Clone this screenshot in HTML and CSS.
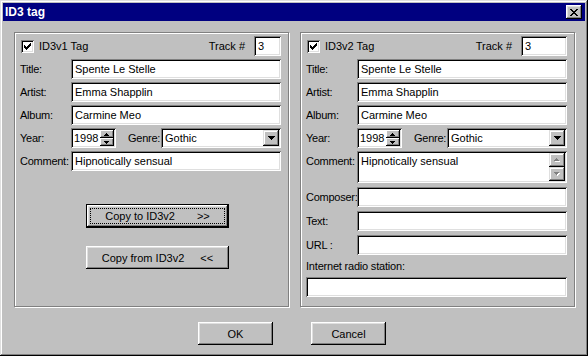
FILE: index.html
```html
<!DOCTYPE html>
<html>
<head>
<meta charset="utf-8">
<link rel="stylesheet" href="styles.css">
</head>
<body>
<div class="window">
  <div class="titlebar">
    <span class="title">ID3 tag</span>
    <span class="close"><svg width="8" height="7" viewBox="0 0 8 7"><path d="M0 0h2v1H0z M6 0h2v1H6z M1 1h2v1H1z M5 1h2v1H5z M2 2h4v1H2z M3 3h2v1H3z M2 4h4v1H2z M1 5h2v1H1z M5 5h2v1H5z M0 6h2v1H0z M6 6h2v1H6z" fill="#000"/></svg></span>
  </div>
  <div class="content">
    <div class="groups">
      <section class="group">
        <div class="row head">
          <span class="check"><svg width="7" height="7" viewBox="0 0 7 7"><path d="M0 2h1v3H0z M1 3h1v3H1z M2 4h1v3H2z M3 3h1v3H3z M4 2h1v3H4z M5 1h1v3H5z M6 0h1v3H6z" fill="#000"/></svg></span>
          <span class="check-label">ID3v1 Tag</span>
          <span class="track-label">Track #</span>
          <span class="field track">3</span>
        </div>
        <div class="row"><span class="lbl">Title:</span><span class="field">Spente Le Stelle</span></div>
        <div class="row"><span class="lbl">Artist:</span><span class="field">Emma Shapplin</span></div>
        <div class="row"><span class="lbl">Album:</span><span class="field">Carmine Meo</span></div>
        <div class="row">
          <span class="lbl">Year:</span>
          <span class="spin"><span class="spin-val">1998</span><span class="spin-btns"><span class="sbtn"><svg width="5" height="3" viewBox="0 0 5 3"><path d="M2 0h1v1H2z M1 1h3v1H1z M0 2h5v1H0z" fill="#000"/></svg></span><span class="sbtn"><svg width="5" height="3" viewBox="0 0 5 3"><path d="M0 0h5v1H0z M1 1h3v1H1z M2 2h1v1H2z" fill="#000"/></svg></span></span></span>
          <span class="lbl-genre">Genre:</span>
          <span class="combo"><span class="combo-val">Gothic</span><span class="combo-btn"><svg width="7" height="4" viewBox="0 0 7 4"><path d="M0 0h7v1H0z M1 1h5v1H1z M2 2h3v1H2z M3 3h1v1H3z" fill="#000"/></svg></span></span>
        </div>
        <div class="row"><span class="lbl">Comment:</span><span class="field">Hipnotically sensual</span></div>
        <button class="btn default copy-to"><span class="focus"><span>Copy to ID3v2</span><span class="arrows wide">&gt;&gt;</span></span></button>
        <button class="btn copy-from"><span>Copy from ID3v2</span><span class="arrows">&lt;&lt;</span></button>
      </section>

      <section class="group">
        <div class="row head">
          <span class="check"><svg width="7" height="7" viewBox="0 0 7 7"><path d="M0 2h1v3H0z M1 3h1v3H1z M2 4h1v3H2z M3 3h1v3H3z M4 2h1v3H4z M5 1h1v3H5z M6 0h1v3H6z" fill="#000"/></svg></span>
          <span class="check-label">ID3v2 Tag</span>
          <span class="track-label">Track #</span>
          <span class="field track wide">3</span>
        </div>
        <div class="row"><span class="lbl">Title:</span><span class="field">Spente Le Stelle</span></div>
        <div class="row"><span class="lbl">Artist:</span><span class="field">Emma Shapplin</span></div>
        <div class="row"><span class="lbl">Album:</span><span class="field">Carmine Meo</span></div>
        <div class="row">
          <span class="lbl">Year:</span>
          <span class="spin"><span class="spin-val">1998</span><span class="spin-btns"><span class="sbtn"><svg width="5" height="3" viewBox="0 0 5 3"><path d="M2 0h1v1H2z M1 1h3v1H1z M0 2h5v1H0z" fill="#000"/></svg></span><span class="sbtn"><svg width="5" height="3" viewBox="0 0 5 3"><path d="M0 0h5v1H0z M1 1h3v1H1z M2 2h1v1H2z" fill="#000"/></svg></span></span></span>
          <span class="lbl-genre">Genre:</span>
          <span class="combo"><span class="combo-val">Gothic</span><span class="combo-btn"><svg width="7" height="4" viewBox="0 0 7 4"><path d="M0 0h7v1H0z M1 1h5v1H1z M2 2h3v1H2z M3 3h1v1H3z" fill="#000"/></svg></span></span>
        </div>
        <div class="row tall">
          <span class="lbl top">Comment:</span>
          <span class="memo">
            <span class="memo-text">Hipnotically sensual</span>
            <span class="vscroll">
              <span class="sbar"><svg width="8" height="5" viewBox="0 0 8 5"><path d="M4 1h1v1H4z M3 2h3v1H3z M2 3h5v1H2z" fill="#fff"/><path d="M3 0h1v1H3z M2 1h3v1H2z M1 2h5v1H1z" fill="#808080"/></svg></span>
              <span class="sbar"><svg width="8" height="5" viewBox="0 0 8 5"><path d="M2 1h5v1H2z M3 2h3v1H3z M4 3h1v1H4z" fill="#fff"/><path d="M1 0h5v1H1z M2 1h3v1H2z M3 2h1v1H3z" fill="#808080"/></svg></span>
            </span>
          </span>
        </div>
        <div class="row loose"><span class="lbl">Composer:</span><span class="field"></span></div>
        <div class="row loose"><span class="lbl">Text:</span><span class="field"></span></div>
        <div class="row loose"><span class="lbl">URL :</span><span class="field"></span></div>
        <div class="radio-label">Internet radio station:</div>
        <div class="row radio"><span class="field"></span></div>
      </section>
    </div>
    <div class="actions">
      <button class="btn action">OK</button>
      <button class="btn action">Cancel</button>
    </div>
  </div>
</div>
</body>
</html>
```

FILE: styles.css
```css
* { box-sizing: border-box; }

body {
  margin: 0;
  background: #c0c0c0;
  font-family: "Liberation Sans", Arial, sans-serif;
  font-size: 11px;
  color: #000;
}

.window {
  width: 588px;
  height: 356px;
  padding: 3px;
  background: #c0c0c0;
  box-shadow: inset -1px -1px #000, inset 1px 1px #dfdfdf, inset -2px -2px #808080, inset 2px 2px #fff;
  display: flex;
  flex-direction: column;
}

.titlebar {
  height: 18px;
  background: #000080;
  display: flex;
  align-items: center;
  justify-content: space-between;
  padding: 0 3px 0 2px;
}

.title {
  color: #fff;
  font-weight: bold;
  font-size: 12px;
  line-height: 18px;
}

.close {
  width: 16px;
  height: 14px;
  background: #c0c0c0;
  box-shadow: inset -1px -1px #000, inset 1px 1px #fff, inset -2px -2px #808080, inset 2px 2px #dfdfdf;
  display: flex;
  align-items: center;
  justify-content: center;
  padding-right: 1px;
}
.close svg { display: block; }

.content {
  flex: 1;
  padding: 11px 10px 0 11px;
  display: flex;
  flex-direction: column;
}

.groups {
  display: flex;
  gap: 11px;
}

.group {
  width: 275px;
  height: 275px;
  border: 1px solid #808080;
  box-shadow: 1px 1px 0 #fff, inset 1px 1px 0 #fff;
  padding: 3px 7px 0 5px;
  display: flex;
  flex-direction: column;
  align-items: stretch;
}

.row {
  display: flex;
  align-items: center;
  height: 20px;
  margin-top: 3px;
  flex: none;
}
.row.head { margin-top: 0; }
.row.tall { height: 32px; align-items: flex-start; }
.row.loose { margin-top: 4px; }
.row.radio { margin-top: 4px; }

.lbl {
  width: 51px;
  flex: none;
  white-space: nowrap;
  letter-spacing: -0.25px;
}
.lbl.top { line-height: 20px; }

.field, .spin, .combo, .memo, .check {
  background: #fff;
  box-shadow: inset 1px 1px #808080, inset -1px -1px #fff, inset 2px 2px #000, inset -2px -2px #dfdfdf;
}

.field {
  flex: 1;
  height: 20px;
  line-height: 20px;
  padding: 0 3px 0 4px;
  white-space: nowrap;
  overflow: hidden;
}

.check {
  width: 13px;
  height: 13px;
  flex: none;
  margin-left: 1px;
  display: flex;
  align-items: center;
  justify-content: center;
}
.check svg { display: block; }

.check-label { margin-left: 5px; }

.track-label { margin-left: auto; margin-right: 9px; }
.field.track { flex: none; width: 27px; }
.field.track.wide { width: 46px; }

.spin {
  width: 45px;
  height: 20px;
  flex: none;
  display: flex;
  padding: 2px;
}
.spin-val {
  flex: 1;
  line-height: 16px;
  padding-left: 1px;
}
.spin-btns {
  width: 14px;
  display: flex;
  flex-direction: column;
}
.sbtn {
  flex: 1;
  background: #c0c0c0;
  box-shadow: inset -1px -1px #000, inset 1px 1px #fff, inset -2px -2px #808080;
  display: flex;
  align-items: center;
  justify-content: center;
  padding-right: 1px;
}
.sbtn svg { display: block; }

.lbl-genre {
  width: 33px;
  margin-left: 12px;
  flex: none;
  white-space: nowrap;
  letter-spacing: -0.25px;
}

.combo {
  flex: 1;
  height: 20px;
  display: flex;
  padding: 2px;
}
.combo-val {
  flex: 1;
  line-height: 16px;
  padding-left: 2px;
}
.combo-btn {
  width: 16px;
  background: #c0c0c0;
  box-shadow: inset -1px -1px #000, inset 1px 1px #dfdfdf, inset -2px -2px #808080, inset 2px 2px #fff;
  display: flex;
  align-items: center;
  justify-content: center;
}
.combo-btn svg { display: block; }

.memo {
  flex: 1;
  height: 32px;
  display: flex;
  padding: 2px;
}
.memo-text {
  flex: 1;
  padding: 1px 0 0 2px;
  line-height: 14px;
}
.vscroll {
  width: 16px;
  display: flex;
  flex-direction: column;
}
.sbar {
  flex: 1;
  background: #c0c0c0;
  box-shadow: inset -1px -1px #000, inset 1px 1px #dfdfdf, inset -2px -2px #808080, inset 2px 2px #fff;
  display: flex;
  align-items: center;
  justify-content: center;
}
.sbar svg { display: block; }

.radio-label {
  margin-top: 5px;
  height: 13px;
  line-height: 13px;
  flex: none;
  letter-spacing: -0.2px;
}

button.btn {
  font: inherit;
  color: #000;
  border: 0;
  padding: 0;
  margin: 0;
  background: #c0c0c0;
  box-shadow: inset -1px -1px #000, inset 1px 1px #fff, inset -2px -2px #808080, inset 2px 2px #dfdfdf;
  display: flex;
  align-items: center;
  justify-content: center;
  flex: none;
}

button.copy-to {
  width: 143px;
  height: 24px;
  margin: 33px 0 0 66px;
  border: 1px solid #000;
  padding: 3px;
}
.focus {
  flex: 1;
  align-self: stretch;
  border: 1px dotted #000;
  display: flex;
  align-items: center;
  justify-content: center;
}
button.copy-from {
  width: 143px;
  height: 23px;
  margin: 18px 0 0 66px;
}
.arrows { margin-left: 16px; }
.arrows.wide { margin-left: 22px; }

.actions {
  display: flex;
  gap: 38px;
  padding-left: 184px;
  margin-top: 15px;
}
button.action {
  width: 75px;
  height: 23px;
}
```
